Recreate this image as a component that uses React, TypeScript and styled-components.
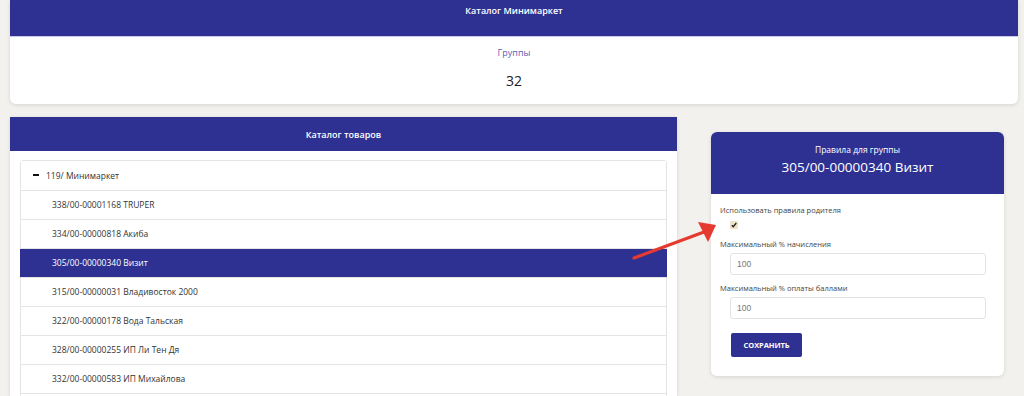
import React from "react";
import styled, { createGlobalStyle } from "styled-components";

const BLUE = "#2e3192";

const GlobalStyle = createGlobalStyle`
  html, body { margin: 0; padding: 0; }
  body {
    background: #f2f1ee;
    font-family: "Open Sans", "Liberation Sans", sans-serif;
    color: #333;
    width: 1024px;
    height: 396px;
    overflow: hidden;
  }
  * { box-sizing: border-box; }
`;

const Page = styled.div`
  position: relative;
  height: 396px;
  overflow: hidden;
  padding: 0 6px 0 10px;
`;

const Card = styled.div`
  background: #fff;
  border-radius: 6px;
  box-shadow: 0 1px 4px rgba(0, 0, 0, 0.12);
  overflow: hidden;
`;

const TopCard = styled(Card)`
  width: 1008px;
  height: 104px;
  border-radius: 0 0 6px 6px;
  display: flex;
  flex-direction: column;
  align-items: center;
`;

const TopHeader = styled.div`
  align-self: stretch;
  height: 37px;
  background: ${BLUE};
  border-bottom: 1px solid #c9c9ee;
  color: #fff;
  font-size: 9px;
  font-weight: 600;
  text-align: center;
  padding-top: 5px;
  line-height: 12px;
`;

const StatLabel = styled.div`
  margin-top: 10px;
  font-size: 9px;
  line-height: 12px;
  color: #5a5eb4;
`;

const StatValue = styled.div`
  margin-top: 13px;
  font-size: 14px;
  font-weight: 500;
  line-height: 18px;
  color: #222;
`;

const Row = styled.div`
  display: flex;
  align-items: flex-start;
  gap: 34px;
  margin-top: 13px;
`;

const LeftCard = styled(Card)`
  width: 667px;
  height: 279px;
  border-radius: 0;
`;

const CardHeader = styled.div`
  height: 34px;
  background: ${BLUE};
  color: #fff;
  font-size: 9px;
  font-weight: 600;
  display: flex;
  align-items: center;
  justify-content: center;
`;

const List = styled.div`
  margin: 9px 10px 0 10px;
  border: 1px solid #e4e4e4;
  border-radius: 3px 3px 0 0;
`;

const Item = styled.div<{ $active?: boolean; $root?: boolean }>`
  height: 29px;
  display: flex;
  align-items: center;
  gap: 7px;
  padding-bottom: 1px;
  border-top: 1px solid #e4e4e4;
  font-size: 8.5px;
  color: ${(p) => (p.$active ? "#fff" : "#333")};
  background: ${(p) => (p.$active ? BLUE : "#fff")};
  margin: ${(p) => (p.$active ? "0 -1px" : "0")};
  padding-left: ${(p) => (p.$root ? "12px" : p.$active ? "32px" : "31px")};
  &:first-child { border-top: none; }
`;

const Minus = styled.span`
  width: 6px;
  height: 2px;
  background: #111;
  display: inline-block;
`;

const RightCard = styled(Card)`
  width: 293px;
  margin-top: 15px;
  padding-bottom: 19px;
`;

const RuleHeader = styled.div`
  height: 62px;
  background: ${BLUE};
  color: #fff;
  display: flex;
  flex-direction: column;
  align-items: center;
  padding-top: 12px;
`;

const RuleSub = styled.div`
  font-size: 8.5px;
  line-height: 12px;
`;

const RuleTitle = styled.div`
  font-size: 13.5px;
  line-height: 18px;
  margin-top: 2px;
`;

const Form = styled.div`
  padding: 11px 18px 0 9px;
  display: flex;
  flex-direction: column;
`;

const Label = styled.div`
  font-size: 7.5px;
  line-height: 10px;
  color: #444;
`;

const Check = styled.span`
  width: 8px;
  height: 8px;
  margin: 6px 0 10px 10px;
  background: #efe2c8;
  border-radius: 1px;
  display: flex;
  align-items: center;
  justify-content: center;
`;

const Input = styled.div`
  height: 22px;
  margin: 4px 0 0 10px;
  border: 1px solid #e3e3e3;
  border-radius: 3px;
  font-family: "Liberation Sans", Arial, sans-serif;
  font-size: 8.5px;
  color: #777;
  display: flex;
  align-items: center;
  padding-left: 6px;
`;

const FieldGap = styled.div`
  height: 8px;
`;

const Button = styled.button`
  width: 71px;
  height: 24px;
  margin: 14px 0 0 11px;
  background: ${BLUE};
  color: #fff;
  border: none;
  border-radius: 2px;
  font-family: "Open Sans", "Liberation Sans", sans-serif;
  font-size: 7.5px;
  font-weight: 700;
  letter-spacing: -0.1px;
  padding: 0;
`;

const Arrow = styled.svg`
  position: absolute;
  left: 0;
  top: 0;
  pointer-events: none;
`;

const items = [
  "338/00-00001168 TRUPER",
  "334/00-00000818 Акиба",
  "305/00-00000340 Визит",
  "315/00-00000031 Владивосток 2000",
  "322/00-00000178 Вода Тальская",
  "328/00-00000255 ИП Ли Тен Дя",
  "332/00-00000583 ИП Михайлова",
  "",
];

export default function App() {
  return (
    <>
      <GlobalStyle />
      <Page>
        <TopCard>
          <TopHeader>Каталог Минимаркет</TopHeader>
          <StatLabel>Группы</StatLabel>
          <StatValue>32</StatValue>
        </TopCard>
        <Row>
          <LeftCard>
            <CardHeader>Каталог товаров</CardHeader>
            <List>
              <Item $root>
                <Minus />
                119/ Минимаркет
              </Item>
              {items.map((t, i) => (
                <Item key={i} $active={i === 2}>
                  {t}
                </Item>
              ))}
            </List>
          </LeftCard>
          <RightCard>
            <RuleHeader>
              <RuleSub>Правила для группы</RuleSub>
              <RuleTitle>305/00-00000340 Визит</RuleTitle>
            </RuleHeader>
            <Form>
              <Label>Использовать правила родителя</Label>
              <Check>
                <svg width="6" height="6" viewBox="0 0 6 6">
                  <path d="M0.8 3.2 L2.3 4.7 L5.3 1" stroke="#222" strokeWidth="1.3" fill="none" />
                </svg>
              </Check>
              <Label>Максимальный % начисления</Label>
              <Input>100</Input>
              <FieldGap />
              <Label>Максимальный % оплаты баллами</Label>
              <Input>100</Input>
              <Button>СОХРАНИТЬ</Button>
            </Form>
          </RightCard>
        </Row>
        <Arrow width="1024" height="396" viewBox="0 0 1024 396">
          <line x1="634" y1="258" x2="704" y2="232" stroke="#e53a2f" strokeWidth="3.2" strokeLinecap="round" />
          <polygon points="716,225 698,222 708,242" fill="#e53a2f" />
        </Arrow>
      </Page>
    </>
  );
}
